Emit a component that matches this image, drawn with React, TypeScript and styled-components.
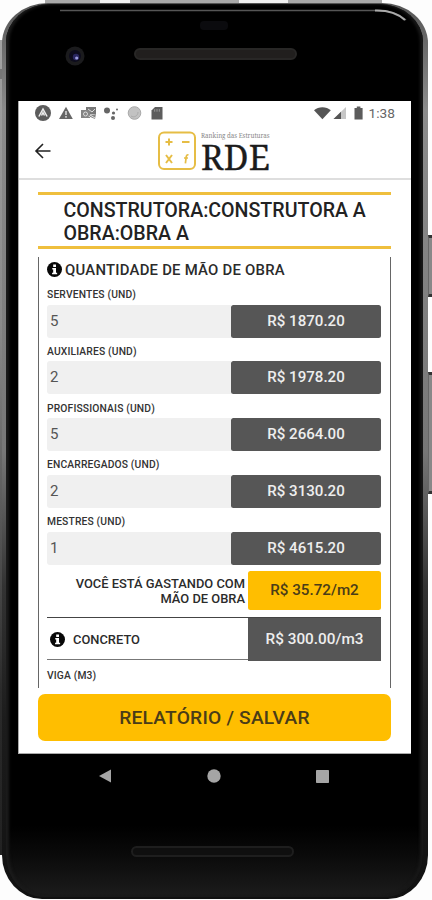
import React from "react";
import styled, { createGlobalStyle } from "styled-components";

const GlobalStyle = createGlobalStyle`
  * { box-sizing: border-box; }
  body { margin: 0; background: #fdfdfd; font-family: Roboto, "Liberation Sans", sans-serif; color: #2b2b2b; }
`;

const Stage = styled.div`
  position: relative;
  width: 432px;
  height: 900px;
  overflow: hidden;
  padding: 3px 4px 1px 2px;
`;

const Rail = styled.div<{ $side: "left" | "right" }>`
  position: absolute;
  ${(p) => p.$side}: ${(p) => (p.$side === "left" ? 0 : 4)}px;
  top: 40px;
  width: 8px;
  height: 815px;
  background: ${(p) =>
    p.$side === "left"
      ? "linear-gradient(180deg, #a2a2a2 0%, #8a8a8a 35%, #555 60%, #2a2a2a 80%, #222 100%)"
      : "linear-gradient(180deg, #a5a5a5 0%, #858585 35%, #626262 50%, #3a3a3a 65%, #1b1b1b 80%, #111 100%)"};
`;

const RailBand = styled.div<{ $side: "left" | "right" }>`
  position: absolute;
  ${(p) => p.$side}: ${(p) => (p.$side === "left" ? 0 : 4)}px;
  top: 69px;
  width: 8px;
  height: 10px;
  background: #777;
`;

const SideKey = styled.div<{ $top: number; $height: number }>`
  position: absolute;
  right: 0;
  top: ${(p) => p.$top}px;
  width: 4px;
  height: ${(p) => p.$height}px;
  background: #888;
  border-top: 3px solid #333;
  border-bottom: 3px solid #333;
  border-left: 1px solid #666;
`;

const TopEdge = styled.div`
  position: absolute;
  top: 0;
  left: 45px;
  width: 337px;
  height: 4px;
  background: linear-gradient(90deg, #aaa 0 55px, #f2f2f2 55px 85px, #aaa 85px 194px, #f2f2f2 194px 243px, #aaa 243px);
`;

const Body = styled.div`
  position: relative;
  height: 896px;
  padding: 1px 5px 2px 4px;
  border-radius: 46px 46px 40px 40px / 40px 40px 44px 44px;
  background: linear-gradient(180deg, #555 0%, #8c8c8c 12%, #777 50%, #333 65%, #1c1c1c 80%, #111 100%);
`;

const Glass = styled.div`
  height: 100%;
  border-radius: 44px 44px 38px 38px / 38px 38px 42px 42px;
  background: linear-gradient(180deg, #000 0 92%, #090909 95%, #1c1c1c 100%);
  box-shadow: inset 3px 0 3px #1b1b1b, inset -3px 0 3px #181818;
  display: flex;
  flex-direction: column;
  padding: 0 7px 0 12px;
`;

const Forehead = styled.div`
  position: relative;
  height: 97px;
  flex: none;
`;

const Shine = styled.svg`
  position: absolute;
  left: 42px;
  top: 3px;
`;

const Camera = styled.svg`
  position: absolute;
  left: 46px;
  top: 41px;
`;

const Sensor = styled.div`
  position: absolute;
  left: 182px;
  top: 17px;
  width: 28px;
  height: 9px;
  border-radius: 4px;
  background: #0b0b0e;
`;

const Speaker = styled.div<{ $chin?: boolean }>`
  width: 163px;
  height: ${(p) => (p.$chin ? 11 : 12)}px;
  border-radius: 6px;
  background: ${(p) => (p.$chin ? "#0f0f0f" : "#211f1e")};
  border: 2px solid ${(p) => (p.$chin ? "#1e1e1e" : "#282726")};
  margin-left: ${(p) => (p.$chin ? 113 : 116)}px;
`;

const EarpieceSlot = styled.div`
  padding-top: 44px;
`;

const Screen = styled.div`
  width: 393px;
  height: 653px;
  flex: none;
  background: #fff;
  overflow: hidden;
  display: flex;
  flex-direction: column;
  border-bottom: 1px solid #aaa;
  border-left: 1px solid #aaa;
`;

const StatusBar = styled.div`
  height: 24px;
  flex: none;
  display: flex;
  justify-content: space-between;
  padding: 0 16px 0 16px;
`;

const StatusGroup = styled.div`
  display: flex;
  align-items: center;
`;

const Clock = styled.span`
  font-size: 13.7px;
  line-height: 24px;
  color: #666;
  margin: 0 0 0 6px;
`;

const Header = styled.header`
  height: 55px;
  flex: none;
  display: grid;
  grid-template-columns: 139px auto 1fr;
  align-items: start;
  border-bottom: 2px solid #dedede;
`;

const BackButton = styled.button`
  border: 0;
  background: none;
  padding: 0;
  margin: 17px 0 0 15px;
  width: 18px;
  height: 18px;
  display: flex;
`;

const Logo = styled.div`
  display: flex;
  padding-top: 6px;
`;

const LogoText = styled.div`
  margin-left: 5px;
  font-family: "Noto Serif", "Liberation Serif", serif;
  color: #1c1c1c;
`;

const Tagline = styled.div`
  font-size: 6.2px;
  line-height: 8px;
  height: 10px;
  padding-top: 1px;
  color: #888;
  white-space: nowrap;
`;

const Brand = styled.div`
  font-size: 34px;
  line-height: 32px;
  white-space: nowrap;
  letter-spacing: 0.4px;
  -webkit-text-stroke: 0.3px #1c1c1c;
`;

const Content = styled.main`
  width: 353px;
  height: 508px;
  margin: 12px 0 0 19px;
  flex: none;
  overflow: hidden;
`;

const Title = styled.h1`
  margin: 0 0 8px;
  height: 57px;
  border-top: 3px solid #efbf3d;
  border-bottom: 3px solid #efbf3d;
  padding: 5px 0 0 25.5px;
  font-size: 19.6px;
  line-height: 22.5px;
  font-weight: 500;
  color: #222;
  white-space: nowrap;
`;

const Card = styled.section`
  height: 431px;
  border-left: 1px solid #666;
  border-right: 1px solid #666;
  padding: 0 9px 0 8px;
  overflow: hidden;
`;

const CardHeading = styled.h2`
  margin: 0;
  height: 30px;
  display: flex;
  align-items: center;
  padding-bottom: 5px;
  gap: 3px;
  font-size: 14.9px;
  font-weight: 500;
  letter-spacing: 0.23px;
  white-space: nowrap;
`;

const Field = styled.div`
  height: 56.8px;
`;

const FieldLabel = styled.div`
  height: 17.6px;
  padding-top: 2px;
  font-size: 10.3px;
  line-height: 11px;
  font-weight: 500;
  letter-spacing: 0.15px;
  color: #333;
  white-space: nowrap;
`;

const FieldRow = styled.div`
  display: grid;
  grid-template-columns: 184px 150px;
  height: 31.6px;
`;

const Quantity = styled.div`
  background: #f0f0f0;
  border-radius: 3px 0 0 3px;
  padding-left: 3px;
  font-size: 15px;
  line-height: 33px;
  color: #555;
`;

const Price = styled.div`
  background: #565656;
  border-radius: 2.5px;
  color: #eee;
  font-size: 15.1px;
  line-height: 33px;
  font-weight: 500;
  text-align: center;
`;

const SpendRow = styled.div`
  display: grid;
  grid-template-columns: 198px 133px;
  column-gap: 3px;
  height: 37.5px;
  margin-top: 0.5px;
`;

const SpendLabel = styled.div`
  padding-top: 4.5px;
  text-align: right;
  font-size: 12.9px;
  line-height: 15px;
  font-weight: 500;
  white-space: nowrap;
`;

const SpendValue = styled.div`
  background: #ffbe00;
  border-radius: 2.5px;
  font-size: 15.2px;
  line-height: 39px;
  font-weight: 500;
  text-align: center;
  color: #4a3c18;
`;

const MaterialRow = styled.div`
  display: grid;
  grid-template-columns: 201px 133px;
  height: 43.5px;
  margin: 8px 0 8px;
  border-top: 1px solid #444;
  border-bottom: 1px solid #777;
`;

const MaterialName = styled.div`
  display: flex;
  align-items: center;
  gap: 8px;
  padding-left: 3px;
  font-size: 12.9px;
  font-weight: 500;
`;

const MaterialPrice = styled.div`
  background: #565656;
  color: #eee;
  font-size: 15.3px;
  font-weight: 500;
  line-height: 43px;
  text-align: center;
`;

const SaveButton = styled.button`
  width: 353px;
  height: 47px;
  margin: -6px 0 0 19px;
  flex: none;
  border: 0;
  border-radius: 7px;
  background: #ffbe00;
  color: #4a3c18;
  font: 500 19.2px/48px Roboto, sans-serif;
  padding: 0;
  letter-spacing: 0.2px;
`;

const NavBar = styled.nav`
  height: 44px;
  flex: none;
  padding-left: 81px;
  display: flex;
  align-items: center;
  gap: 95.5px;
`;

const Chin = styled.div`
  padding-top: 48px;
`;

const InfoIcon = ({ size }: { size: number }) => (
  <svg width={size} height={size} viewBox="0 0 16 16">
    <circle cx="8" cy="8" r="8" fill="#080808" />
    <path d="M6.6 2.7h3v2.5h-3zM5.6 6.4h4v5h1.2v1.7H5.4v-1.7h1.2V8H5.6z" fill="#fff" />
  </svg>
);

const NotificationIcons = () => (
  <svg width="132" height="18" viewBox="0 0 132 18" fill="#666">
    <circle cx="8" cy="9" r="8" fill="#5c5c5c" />
    <path d="M3.9 12.5 8 5l4.1 7.5M6.5 11.5 8 8.7l1.5 2.8" fill="none" stroke="#eee" strokeWidth="1.5" />
    <path d="M31 2.7 37.8 15H24z" />
    <path d="M31 7v4M31 12v1.7" stroke="#eee" strokeWidth="1.3" />
    <path d="m51 3 10 0 0 7-10 1z" fill="#777" />
    <path d="M46 6h9v8h-9zM53 12l7 3 1-5" fill="#858585" />
    <circle cx="50.5" cy="10" r="2" fill="none" stroke="#ddd" />
    <path d="m53 5 4 3 3-3M55 11l5 3" fill="none" stroke="#ddd" />
    <circle cx="72" cy="6.5" r="3" />
    <circle cx="78.5" cy="9" r="1.6" />
    <circle cx="78" cy="14" r="2" />
    <circle cx="82" cy="5.5" r="1" />
    <circle cx="99.5" cy="9" r="6.3" fill="#c2c2c2" stroke="#aaa" />
    <path d="M96 12c3 2 7 0 7-4" fill="none" stroke="#aaa" />
    <path d="M120 3h7.5v12.5H116.5V6.5z" fill="#5d5d5d" />
    <path d="M119.7 5.2v2.5M122 5v2.7M124.3 5v2.7" stroke="#aaa" strokeWidth=".8" />
  </svg>
);

const SystemIcons = () => (
  <svg width="49" height="18" viewBox="0 0 49 18">
    <path d="M0 6.2C4.5 2.2 12.3 2.2 16.8 6.2L8.4 15.3z" fill="#555" />
    <path d="M19.5 15 32 3v12z" fill="#c6c6c6" />
    <path d="M19.5 15 27 7.8V15z" fill="#555" />
    <path d="M40.5 4h2.3V2.5h3.6V4h2.2v11.5h-8.1z" fill="#5c5c5c" />
  </svg>
);

const fields = [
  { label: "SERVENTES (UND)", quantity: "5", price: "R$ 1870.20" },
  { label: "AUXILIARES (UND)", quantity: "2", price: "R$ 1978.20" },
  { label: "PROFISSIONAIS (UND)", quantity: "5", price: "R$ 2664.00" },
  { label: "ENCARREGADOS (UND)", quantity: "2", price: "R$ 3130.20" },
  { label: "MESTRES (UND)", quantity: "1", price: "R$ 4615.20" },
];

export default function App() {
  return (
    <>
      <GlobalStyle />
      <Stage>
        <TopEdge />
        <Rail $side="left" />
        <Rail $side="right" />
        <RailBand $side="left" />
        <RailBand $side="right" />
        <SideKey $top={235} $height={62} />
        <SideKey $top={372} $height={122} />
        <Body>
          <Glass>
            <Forehead>
              <Shine width="350" height="20" viewBox="0 0 350 20" fill="none">
                <path d="M0 3.5H320Q336 4 346 13" stroke="#555" strokeWidth="1.5" />
                <path d="M315 3.5Q334 3 345 13" stroke="#aaa" strokeWidth="2" />
              </Shine>
              <Sensor />
              <Camera width="22" height="22" viewBox="0 0 22 22">
                <circle cx="11" cy="11" r="9.5" fill="#1b1b1d" />
                <circle cx="11" cy="11" r="6" fill="#0d0c1c" />
                <circle cx="12" cy="12" r="3.2" fill="#29265f" />
                <circle cx="12.7" cy="13" r="1.6" fill="#9c9cdf" />
              </Camera>
              <EarpieceSlot>
                <Speaker />
              </EarpieceSlot>
            </Forehead>
            <Screen>
              <StatusBar>
                <StatusGroup>
                  <NotificationIcons />
                </StatusGroup>
                <StatusGroup>
                  <SystemIcons />
                  <Clock>1:38</Clock>
                </StatusGroup>
              </StatusBar>
              <Header>
                <BackButton aria-label="Voltar">
                  <svg width="18" height="18" viewBox="0 0 18 18" fill="none" stroke="#222" strokeWidth="1.6">
                    <path d="M16.5 9H2.5M9 2 2 9l7 7" />
                  </svg>
                </BackButton>
                <Logo>
                  <svg width="38" height="40" viewBox="0 0 38 40" fill="none" stroke="#e6bd45">
                    <rect x="1" y="1.5" width="36" height="36.5" rx="5" strokeWidth="2" />
                    <path d="M7.5 11h7M11 7.5v7M24 11h7.5" strokeWidth="2" />
                    <path d="m8 24 6 8M14 24l-6 8" strokeWidth="2" />
                    <path d="M30.5 24q-2-.7-2.3 1.8l-.8 6.5M26 27h4" strokeWidth="1.7" />
                  </svg>
                  <LogoText>
                    <Tagline>Ranking das Estruturas</Tagline>
                    <Brand>RDE</Brand>
                  </LogoText>
                </Logo>
              </Header>
              <Content>
                <Title>
                  CONSTRUTORA:CONSTRUTORA A
                  <br />
                  OBRA:OBRA A
                </Title>
                <Card>
                  <CardHeading>
                    <InfoIcon size={15} />
                    QUANTIDADE DE MÃO DE OBRA
                  </CardHeading>
                  {fields.map((f) => (
                    <Field key={f.label}>
                      <FieldLabel>{f.label}</FieldLabel>
                      <FieldRow>
                        <Quantity>{f.quantity}</Quantity>
                        <Price>{f.price}</Price>
                      </FieldRow>
                    </Field>
                  ))}
                  <SpendRow>
                    <SpendLabel>
                      VOCÊ ESTÁ GASTANDO COM
                      <br />
                      MÃO DE OBRA
                    </SpendLabel>
                    <SpendValue>R$ 35.72/m2</SpendValue>
                  </SpendRow>
                  <MaterialRow>
                    <MaterialName>
                      <InfoIcon size={15} />
                      CONCRETO
                    </MaterialName>
                    <MaterialPrice>R$ 300.00/m3</MaterialPrice>
                  </MaterialRow>
                  <FieldLabel>VIGA (M3)</FieldLabel>
                </Card>
              </Content>
              <SaveButton>RELATÓRIO / SALVAR</SaveButton>
            </Screen>
            <NavBar>
              <svg width="12" height="14" viewBox="0 0 12 14">
                <path d="M0 7 12 .5v13z" fill="#a5a5a5" />
              </svg>
              <svg width="14" height="14" viewBox="0 0 14 14">
                <circle cx="7" cy="7" r="6.7" fill="#a5a5a5" />
              </svg>
              <svg width="13" height="13" viewBox="0 0 13 13">
                <rect width="13" height="13" rx=".7" fill="#a5a5a5" />
              </svg>
            </NavBar>
            <Chin>
              <Speaker $chin />
            </Chin>
          </Glass>
        </Body>
      </Stage>
    </>
  );
}
